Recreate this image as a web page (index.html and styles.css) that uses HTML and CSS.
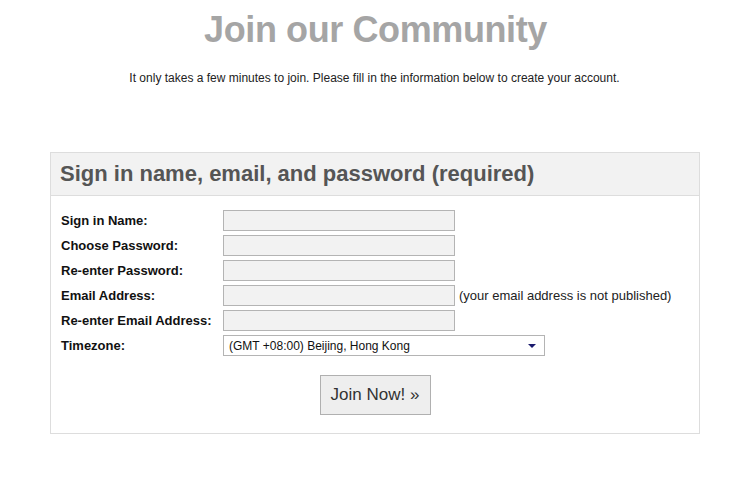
FILE: index.html
```html
<!DOCTYPE html>
<html>
<head>
<meta charset="utf-8">
<title>Join our Community</title>
<link rel="stylesheet" href="styles.css">
</head>
<body>
<div class="page">
  <h1 class="title">Join our Community</h1>
  <p class="intro">It only takes a few minutes to join. Please fill in the information below to create your account.</p>
  <div class="box">
    <div class="box-head">Sign in name, email, and password (required)</div>
    <form class="box-body">
      <div class="grid">
        <label class="lbl">Sign in Name:</label>
        <div class="field"><input class="inp" type="text"></div>
        <label class="lbl">Choose Password:</label>
        <div class="field"><input class="inp" type="password"></div>
        <label class="lbl">Re-enter Password:</label>
        <div class="field"><input class="inp" type="password"></div>
        <label class="lbl">Email Address:</label>
        <div class="field"><input class="inp" type="text"><span class="note">(your email address is not published)</span></div>
        <label class="lbl">Re-enter Email Address:</label>
        <div class="field"><input class="inp" type="text"></div>
        <label class="lbl">Timezone:</label>
        <div class="field">
          <div class="sel">
            <span class="sel-text">(GMT +08:00) Beijing, Hong Kong</span>
            <span class="sel-arrow"></span>
          </div>
        </div>
      </div>
      <div class="actions">
        <button class="btn" type="button">Join Now! »</button>
      </div>
    </form>
  </div>
</div>
</body>
</html>
```

FILE: styles.css
```css
html, body {
  margin: 0;
  padding: 0;
  background: #ffffff;
}
body {
  font-family: "Liberation Sans", Arial, sans-serif;
  color: #222;
}
.page {
  width: 749px;
  padding-top: 10px;
}
.title {
  margin: 0;
  text-align: center;
  font-size: 36px;
  line-height: 40px;
  font-weight: bold;
  color: #a5a5a5;
  letter-spacing: -0.4px;
  padding-left: 2px;
}
.intro {
  margin: 21px 0 0;
  text-align: center;
  font-size: 12px;
  line-height: 14px;
  color: #222;
}
.box {
  margin: 67px 0 0 50px;
  width: 648px;
  border: 1px solid #dddddd;
}
.box-head {
  height: 42px;
  line-height: 42px;
  padding-left: 9px;
  background: #f2f2f2;
  border-bottom: 1px solid #dddddd;
  font-size: 22px;
  font-weight: bold;
  color: #555;
}
.box-body {
  margin: 0;
  padding: 14px 0 18px 10px;
}
.grid {
  display: grid;
  grid-template-columns: 162px auto;
  row-gap: 4px;
  align-items: center;
}
.lbl {
  font-size: 13px;
  font-weight: bold;
  color: #111;
  line-height: 21px;
}
.field {
  display: flex;
  align-items: center;
  height: 21px;
}
.inp {
  box-sizing: border-box;
  width: 232px;
  height: 21px;
  margin: 0;
  padding: 0 4px;
  border: 1px solid #b4b4b4;
  background: #f2f2f2;
  font-family: "Liberation Sans", Arial, sans-serif;
  font-size: 12px;
}
.note {
  margin-left: 4px;
  font-size: 13px;
  color: #222;
}
.sel {
  position: relative;
  box-sizing: border-box;
  width: 322px;
  height: 21px;
  border: 1px solid #b4b4b4;
  background: #fff;
  display: flex;
  align-items: center;
  padding-left: 5px;
}
.sel-text {
  font-size: 12px;
  color: #111;
}
.sel-arrow {
  position: absolute;
  right: 8px;
  top: 8px;
  width: 0;
  height: 0;
  border-left: 4px solid transparent;
  border-right: 4px solid transparent;
  border-top: 4px solid #1a1a6e;
}
.actions {
  display: flex;
  justify-content: center;
  padding-top: 19px;
  padding-right: 10px;
}
.btn {
  box-sizing: border-box;
  width: 111px;
  height: 40px;
  margin: 0;
  padding: 0;
  border: 1px solid #b0b0b0;
  background: #eeeeee;
  font-family: "Liberation Sans", Arial, sans-serif;
  font-size: 17px;
  color: #333;
}
```
